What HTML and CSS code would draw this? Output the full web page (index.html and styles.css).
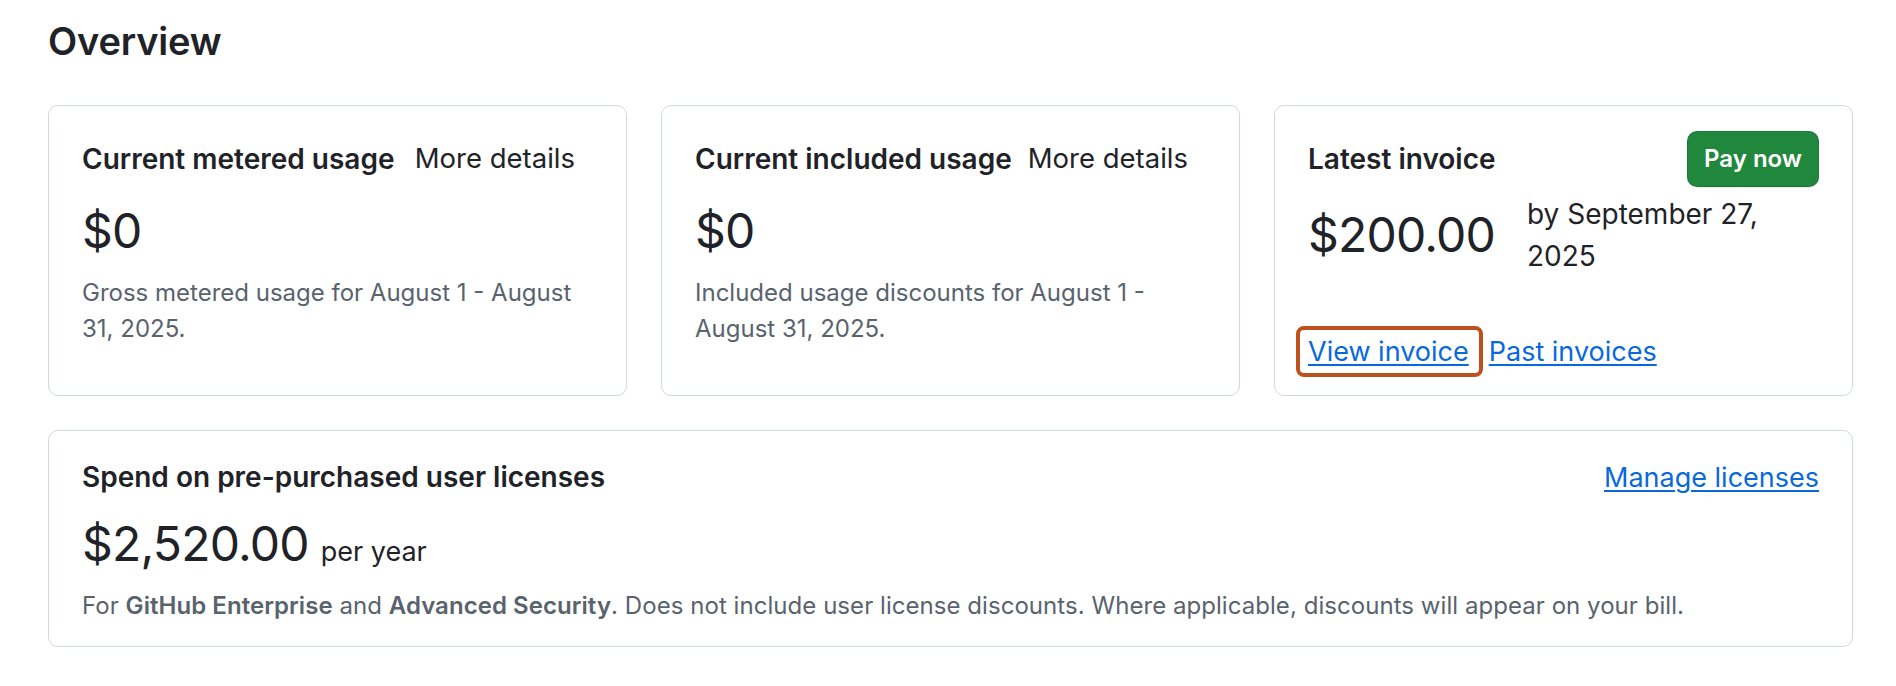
FILE: index.html
```html
<!DOCTYPE html>
<html lang="en">
<head>
<meta charset="utf-8">
<title>Overview</title>
<link rel="stylesheet" href="styles.css">
</head>
<body>
<main class="page">
  <h2 class="page-title">Overview</h2>
  <div class="cards">
    <section class="card">
      <div class="card-head">
        <h3 class="card-title">Current metered usage</h3>
        <button class="btn-invisible" type="button">More details</button>
      </div>
      <div class="amount">$0</div>
      <p class="muted">Gross metered usage for August 1 - August 31, 2025.</p>
    </section>
    <section class="card">
      <div class="card-head">
        <h3 class="card-title">Current included usage</h3>
        <button class="btn-invisible" type="button">More details</button>
      </div>
      <div class="amount">$0</div>
      <p class="muted">Included usage discounts for August 1 - August 31, 2025.</p>
    </section>
    <section class="card">
      <div class="card-head">
        <h3 class="card-title">Latest invoice</h3>
        <button class="btn-primary" type="button">Pay now</button>
      </div>
      <div class="invoice-row">
        <div class="amount">$200.00</div>
        <div class="due">by September 27, 2025</div>
      </div>
      <div class="links">
        <a class="link highlighted" href="#">View invoice</a>
        <a class="link" href="#">Past invoices</a>
      </div>
    </section>
  </div>
  <section class="card card-wide">
    <div class="card-head-plain">
      <h3 class="card-title">Spend on pre-purchased user licenses</h3>
      <a class="link" href="#">Manage licenses</a>
    </div>
    <div class="amount-row">
      <span class="amount">$2,520.00</span>
      <span class="per">per year</span>
    </div>
    <p class="muted muted-wide">For <strong>GitHub Enterprise</strong> and <strong>Advanced Security</strong>. Does not include user license discounts. Where applicable, discounts will appear on your bill.</p>
  </section>
</main>
</body>
</html>
```

FILE: styles.css
```css
* { box-sizing: border-box; }

html, body {
  margin: 0;
  background: #ffffff;
}

body {
  font-family: Inter, "Noto Sans", "Liberation Sans", sans-serif;
  color: #1f2328;
}

.page {
  padding: 18px 43px 0 48px;
}

.page-title {
  margin: 0 0 39px;
  font-size: 38px;
  line-height: 1.25;
  font-weight: 600;
  letter-spacing: -0.2px;
}

.cards {
  display: grid;
  grid-template-columns: repeat(3, minmax(0, 1fr));
  gap: 34px;
}

.card {
  display: flex;
  flex-direction: column;
  border: 1px solid #d1d9e0;
  border-radius: 10px;
  padding: 25px 33px 23px;
  background: #ffffff;
}

.card-wide {
  margin-top: 34px;
  padding-bottom: 22px;
}

.card-head {
  display: flex;
  align-items: center;
  justify-content: space-between;
  height: 56px;
}

.card-head-plain {
  display: flex;
  align-items: baseline;
  justify-content: space-between;
}

.card-title {
  margin: 0;
  font-size: 28px;
  line-height: 1.5;
  font-weight: 600;
  white-space: nowrap;
}

.btn-invisible {
  font: inherit;
  font-size: 27.5px;
  line-height: 1.5;
  color: #1f2328;
  background: transparent;
  border: 0;
  padding: 0 18px 0 6px;
  white-space: nowrap;
  flex-shrink: 0;
  cursor: pointer;
}

.btn-primary {
  font: inherit;
  font-size: 24px;
  font-weight: 600;
  color: #ffffff;
  background: #1f883d;
  border: 1px solid rgba(31, 35, 40, 0.15);
  border-radius: 10px;
  height: 56px;
  padding: 0 16px;
  white-space: nowrap;
  box-shadow: 0 1px 0 rgba(31, 35, 40, 0.1);
  cursor: pointer;
}

.amount {
  font-size: 48px;
  line-height: 1.5;
  font-weight: 400;
  letter-spacing: -0.8px;
  margin: 8px 0 8px;
}

.muted {
  margin: 0;
  font-size: 24px;
  line-height: 1.5;
  color: #59636e;
}

.muted-wide {
  letter-spacing: 0.05px;
}

.muted strong {
  font-weight: 600;
}

.invoice-row {
  display: flex;
  align-items: center;
  gap: 32px;
  margin-top: 6px;
}

.invoice-row .amount {
  margin: 0;
}

.due {
  font-size: 28px;
  line-height: 1.5;
  max-width: 250px;
}

.links {
  display: flex;
  gap: 20px;
  margin-top: auto;
  padding-top: 55px;
}

.link {
  font-size: 27px;
  line-height: 1.5;
  color: #0969da;
  text-decoration: underline;
  text-decoration-thickness: 2px;
  text-underline-offset: 3px;
  white-space: nowrap;
}

.highlighted {
  position: relative;
}

.highlighted::after {
  content: "";
  position: absolute;
  top: -6px;
  bottom: -5px;
  left: -12px;
  right: -14px;
  border: 4px solid #bd501c;
  border-radius: 8px;
}

.amount-row {
  display: flex;
  align-items: baseline;
  gap: 12px;
  margin: 9px 0 8px;
}

.amount-row .amount {
  margin: 0;
}

.per {
  font-size: 27px;
  line-height: 1.5;
}
```
